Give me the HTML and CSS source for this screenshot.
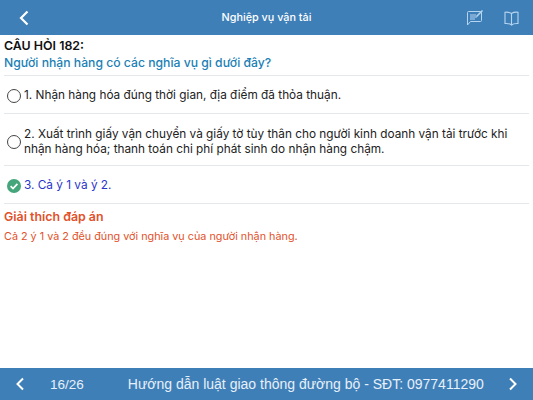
FILE: index.html
```html
<!DOCTYPE html>
<html lang="vi">
<head>
    <meta charset="UTF-8">
    <meta name="viewport" content="width=device-width, initial-scale=1.0">
    <title>Nghiệp vụ vận tải</title>
    <link rel="stylesheet" href="styles.css">
</head>
<body>
    <header class="top-bar">
        <button class="icon-button back-button">
            <svg width="12" height="16" viewBox="0 0 12 16" fill="none" stroke="currentColor" stroke-width="2.2">
                <path d="M9.5 1.5L3 8l6.5 6.5"/>
            </svg>
        </button>
        <h1 class="top-title">Nghiệp vụ vận tải</h1>
        <div class="top-actions">
            <svg class="note-icon" width="18" height="18" viewBox="0 0 18 18" fill="none" stroke="currentColor" stroke-width="1">
                <path d="M2.5 2.5H14.5Q15.5 2.5 15.5 3.5V11.5Q15.5 12.5 14.5 12.5H4.5L1.5 16V3.5Q1.5 2.5 2.5 2.5Z"/>
                <path d="M4 6H10M4 8H11M4 10H9"/>
                <path d="M10.5 7.5L16.5 1.5" stroke-width="1.6"/>
            </svg>
            <svg class="book-icon" width="17" height="16" viewBox="0 -1 17 16" fill="none" stroke="currentColor" stroke-width="1.1">
                <path d="M8.5 2.5C7 1.4 4.5 1 2 1.2V12.5C4.5 12.3 7 12.7 8.5 14C10 12.7 12.5 12.3 15 12.5V1.2C12.5 1 10 1.4 8.5 2.5Z"/>
                <path d="M8.5 2.5V14"/>
            </svg>
        </div>
    </header>

    <main class="content">
        <section class="question">
            <p class="question-number">CÂU HỎI 182:</p>
            <p class="question-text">Người nhận hàng có các nghĩa vụ gì dưới đây?</p>
        </section>

        <div class="answer">
            <span class="radio"></span>
            <p>1. Nhận hàng hóa đúng thời gian, địa điểm đã thỏa thuận.</p>
        </div>
        <div class="answer answer-tall">
            <span class="radio"></span>
            <p>2. Xuất trình giấy vận chuyển và giấy tờ tùy thân cho người kinh doanh vận tải trước khi nhận hàng hóa; thanh toán chi phí phát sinh do nhận hàng chậm.</p>
        </div>
        <div class="answer answer-correct">
            <svg class="check" width="14" height="14" viewBox="0 0 14 14">
                <circle cx="7" cy="7" r="7" fill="#45a67c"/>
                <path d="M3.6 7.2L6 9.5L10.4 4.8" fill="none" stroke="#fff" stroke-width="1.7"/>
            </svg>
            <p>3. Cả ý 1 và ý 2.</p>
        </div>

        <section class="explain">
            <h2 class="explain-title">Giải thích đáp án</h2>
            <p class="explain-text">Cả 2 ý 1 và 2 đều đúng với nghĩa vụ của người nhận hàng.</p>
        </section>
    </main>

    <footer class="bottom-bar">
        <button class="icon-button">
            <svg width="10" height="14" viewBox="0 0 10 14" fill="none" stroke="currentColor" stroke-width="2">
                <path d="M8 1.5L2.5 7L8 12.5"/>
            </svg>
        </button>
        <span class="page-count">16/26</span>
        <span class="bottom-title">Hướng dẫn luật giao thông đường bộ - SĐT: 0977411290</span>
        <button class="icon-button">
            <svg width="10" height="14" viewBox="0 0 10 14" fill="none" stroke="currentColor" stroke-width="2">
                <path d="M2 1.5L7.5 7L2 12.5"/>
            </svg>
        </button>
    </footer>
</body>
</html>
```

FILE: styles.css
```css
* {
    margin: 0;
    padding: 0;
    box-sizing: border-box;
}

html,
body {
    height: 100%;
}

body {
    width: 533px;
    height: 400px;
    overflow: hidden;
    display: flex;
    flex-direction: column;
    font-family: 'Inter', 'Liberation Sans', sans-serif;
    color: #222;
    background-color: white;
}

.icon-button {
    display: flex;
    align-items: center;
    justify-content: center;
    background: none;
    border: none;
    color: white;
}

.top-bar {
    height: 35px;
    flex-shrink: 0;
    display: flex;
    align-items: center;
    justify-content: space-between;
    padding: 0 13px 0 18px;
    position: relative;
    background-color: #3f7fb8;
    color: white;
}

.top-title {
    position: absolute;
    left: 0;
    right: 0;
    text-align: center;
    font-size: 10.8px;
    font-weight: 500;
}

.top-actions {
    display: flex;
    align-items: center;
    gap: 19px;
    color: #b5d5f0;
}

.content {
    flex: 1;
    padding: 3px 4px 0;
}

.question {
    padding-bottom: 4px;
    border-bottom: 1px solid #e4e8ea;
}

.question-number {
    font-size: 12.4px;
    font-weight: 600;
    line-height: 16px;
    color: #111;
}

.question-text {
    font-size: 12.2px;
    font-weight: 500;
    line-height: 17px;
    color: #1c7fb5;
}

.answer {
    display: flex;
    align-items: center;
    gap: 3px;
    padding: 12px 3px 10px;
    font-size: 11.8px;
    line-height: 15px;
    border-bottom: 1px solid #e4e8ea;
    color: #222;
}

.answer-tall {
    padding: 13px 3px 8px;
}

.answer-correct {
    color: #2a35cc;
}

.radio {
    width: 14px;
    height: 14px;
    flex-shrink: 0;
    border: 1.6px solid #444;
    border-radius: 50%;
}

.check {
    flex-shrink: 0;
}

.explain {
    padding-top: 5px;
}

.explain-title {
    font-size: 12.4px;
    font-weight: 600;
    line-height: 16px;
    color: #e2512a;
}

.explain-text {
    margin-top: 5px;
    font-size: 10.8px;
    line-height: 14px;
    color: #e2512a;
}

.bottom-bar {
    height: 32px;
    flex-shrink: 0;
    display: flex;
    align-items: center;
    padding: 0 15px;
    background-color: #3f7fb8;
    color: #e6f0f8;
    font-family: 'Liberation Sans', sans-serif;
    font-size: 14px;
}

.page-count {
    margin-left: 25px;
    font-size: 13.5px;
}

.bottom-title {
    margin-left: 44px;
    flex: 1;
}
```
